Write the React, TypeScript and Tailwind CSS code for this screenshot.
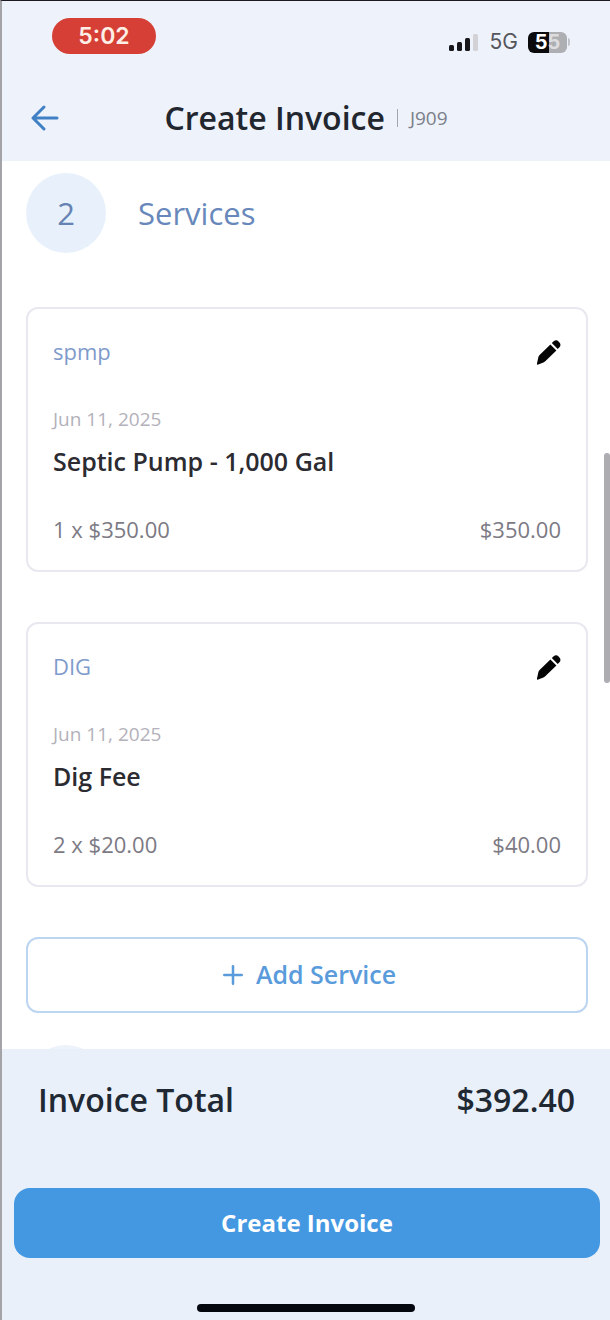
import React from 'react';
import { Plus } from 'lucide-react';

interface Service {
  code: string;
  date: string;
  name: string;
  quantity: number;
  price: number;
}

const services: Service[] = [
  { code: 'spmp', date: 'Jun 11, 2025', name: 'Septic Pump - 1,000 Gal', quantity: 1, price: 350 },
  { code: 'DIG', date: 'Jun 11, 2025', name: 'Dig Fee', quantity: 2, price: 20 },
];

const money = (value: number) => `$${value.toFixed(2)}`;

const StatusBar: React.FC = () => (
  <div className="flex items-center justify-between pt-[17px] pr-10 pl-[50px] font-['Inter',sans-serif]">
    <span className="flex h-9 w-[104px] items-center justify-center rounded-full bg-[#d63f35] text-[23px] font-semibold text-[#fdeee6]">
      5:02
    </span>
    <div className="flex items-center gap-[10px] pt-3">
      <svg width="32" height="20" viewBox="0 0 32 20" aria-hidden="true">
        <rect x="1" y="13" width="5" height="6" rx="1.5" fill="#17171b" />
        <rect x="9" y="10" width="5" height="9" rx="1.5" fill="#17171b" />
        <rect x="17" y="6" width="5" height="13" rx="1.5" fill="#17171b" />
        <rect x="25" y="2" width="5" height="17" rx="1.5" fill="#d2d2d7" />
      </svg>
      <span className="text-[21px] leading-6 text-[#55565c]">5G</span>
      <div className="flex items-center gap-px">
        <div className="flex h-[21px] w-[39px] items-center justify-center rounded-md bg-linear-to-r from-[#0b0b0e] from-55% to-[#aeafb3] to-55% text-xl font-bold">
          <span className="text-white">5</span>
          <span className="text-[#dddde0]">5</span>
        </div>
        <div className="h-2 w-[2px] rounded-r-full bg-[#c4c5ca]"></div>
      </div>
    </div>
  </div>
);

const PencilIcon: React.FC = () => (
  <svg width="28" height="28" viewBox="0 -2 28 28" fill="#050505" aria-hidden="true">
    <path d="M17.4 5.4 23.4 11.4 12 22.6Q11.3 23.2 10.4 23.6L5.2 25.6Q3.6 26 4 24.4L5.4 18Q5.7 16.8 6.6 15.9Z" />
    <path d="M18.8 4.1 20.8 2.2Q23.2.2 25.8 2.7 28.6 5.4 26.7 8L24.7 10Z" />
  </svg>
);

const ServiceCard: React.FC<{ service: Service }> = ({ service }) => (
  <article className="rounded-xl border-2 border-[#e9e8f0] px-[25px] pt-7 pb-[25px]">
    <div className="flex items-center justify-between">
      <span className="text-[22px] leading-7 text-[#7f9bcb]">{service.code}</span>
      <button type="button" aria-label={`Edit ${service.name}`}>
        <PencilIcon />
      </button>
    </div>
    <p className="mt-10 text-[19px] leading-7 text-[#b3b1ba]">{service.date}</p>
    <h3 className="mt-3 text-[25px] leading-8 font-semibold text-[#2b2b31]">{service.name}</h3>
    <div className="mt-9 flex justify-between text-[22px] leading-8 text-[#7c7a84]">
      <span>{service.quantity} x {money(service.price)}</span>
      <span>{money(service.quantity * service.price)}</span>
    </div>
  </article>
);

export default function App() {
  return (
    <div className="relative flex h-screen flex-col border-t border-l-2 border-t-[#1b1a20] border-l-[#a3a3a8] bg-white font-['Open_Sans',sans-serif]">
      <header className="h-40 shrink-0 bg-[#eef2fa]">
        <StatusBar />
        <div className="grid grid-cols-[1fr_auto_1fr] items-center pt-11">
          <button type="button" aria-label="Back" className="w-fit pl-7">
            <svg width="30" height="28" viewBox="0 0 30 28" fill="none" stroke="#4080c4" strokeWidth="3" strokeLinecap="round" strokeLinejoin="round" aria-hidden="true">
              <path d="M27 14H3M14 3 3 14l11 11" />
            </svg>
          </button>
          <h1 className="flex items-center gap-3 text-[32px] leading-10 font-semibold text-[#22262f]">
            Create Invoice
            <span className="h-[18px] w-px bg-[#a4a7b0]"></span>
            <span className="text-[19px] font-normal text-[#7c7f89]">J909</span>
          </h1>
        </div>
      </header>

      <main className="min-h-0 flex-1 overflow-hidden pt-3 pr-[22px] pl-6">
        <div className="flex items-center gap-8">
          <span className="flex size-20 items-center justify-center rounded-full bg-[#e8f1fb] text-[31px] text-[#6683b3]">2</span>
          <h2 className="text-[31px] leading-10 text-[#6888bb]">Services</h2>
        </div>

        <div className="mt-[54px] flex flex-col gap-[50px]">
          {services.map((service) => (
            <ServiceCard key={service.code} service={service} />
          ))}
          <button
            type="button"
            className="flex h-[76px] items-center justify-center gap-2 rounded-xl border-2 border-[#bcd5f0] text-[25px] font-semibold text-[#5a9bdc]"
          >
            <Plus size={30} strokeWidth={2} />
            Add Service
          </button>
        </div>

        {/* Next step, scrolled under the footer */}
        <div className="mt-8 size-20 rounded-full bg-[#eef3fb]"></div>
      </main>

      <footer className="shrink-0 bg-[#e9f0fa] pt-[31px] pb-2">
        <div className="flex justify-between pr-[35px] pl-9 text-[32px] leading-10 font-semibold text-[#202833]">
          <span>Invoice Total</span>
          <span>$392.40</span>
        </div>
        <div className="mt-[68px] pr-[10px] pl-3">
          <button type="button" className="h-[70px] w-full rounded-2xl bg-[#4498e2] text-2xl font-bold text-white">
            Create Invoice
          </button>
        </div>
        <div className="mx-auto mt-[46px] h-2 w-[218px] rounded-full bg-[#04070d]"></div>
      </footer>

      {/* Scroll thumb */}
      <div className="absolute top-[452px] right-0 h-[230px] w-[6px] rounded-full bg-[#adacb0]"></div>
    </div>
  );
}
